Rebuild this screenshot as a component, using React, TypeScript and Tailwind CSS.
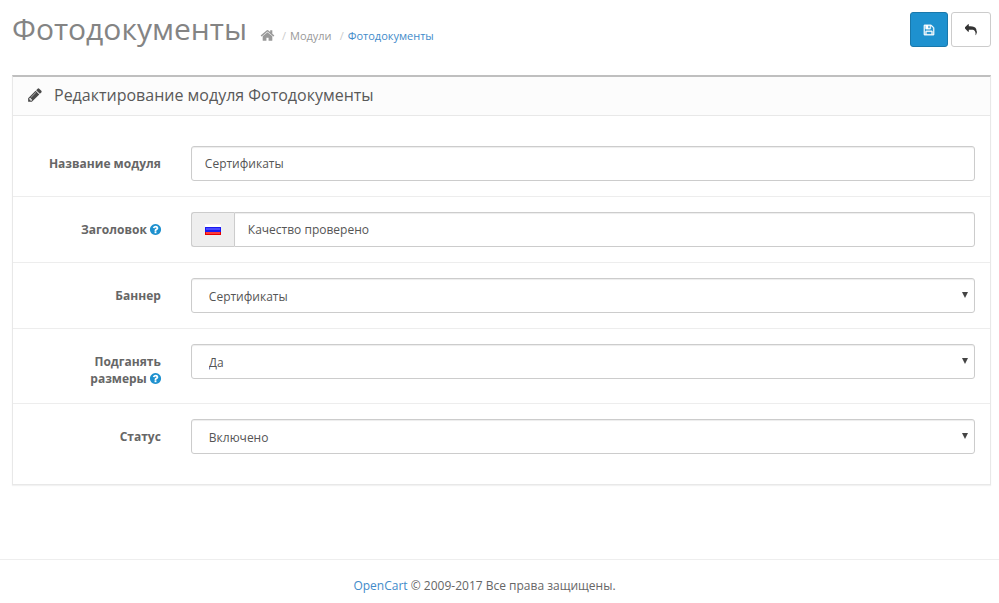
import React, { useState } from "react";

const ICONS = {
  home: "M1472 992v480q0 26-19 45t-45 19h-384v-384h-256v384h-384q-26 0-45-19t-19-45v-480q0-1 .5-3t.5-3l575-474 575 474q1 2 1 6zm223-69l-62 74q-8 9-21 11h-3q-13 0-21-7l-692-577-692 577q-12 8-24 7-13-2-21-11l-62-74q-8-10-7-23.5t11-21.5l719-599q32-26 76-26t76 26l244 204v-195q0-14 9-23t23-9h192q14 0 23 9t9 23v408l219 182q10 8 11 21.5t-7 23.5z",
  pencil:
    "M491 1536l91-91-235-235-91 91v107h128v128h107zm523-928q0-22-22-22-10 0-17 7l-542 542q-7 7-7 17 0 22 22 22 10 0 17-7l542-542q7-7 7-17zm-54-192l416 416-832 832h-416v-416zm683 96q0 53-37 90l-166 166-416-416 166-165q36-38 90-38 53 0 91 38l235 234q37 39 37 91z",
  question:
    "M1024 1376v-192q0-14-9-23t-23-9h-192q-14 0-23 9t-9 23v192q0 14 9 23t23 9h192q14 0 23-9t9-23zm256-672q0-88-55.5-163t-138.5-116-170-41q-243 0-371 213-15 24 8 42l132 100q7 6 19 6 16 0 25-12 53-68 86-92 34-24 86-24 48 0 85.5 26t37.5 59q0 38-20 61t-68 45q-63 28-115.5 86.5t-52.5 125.5v36q0 14 9 23t23 9h192q14 0 23-9t9-23q0-19 21.5-49.5t54.5-49.5q32-18 49-28.5t46-35 44.5-48 28-60.5 12.5-81zm384 192q0 209-103 385.5t-279.5 279.5-385.5 103-385.5-103-279.5-279.5-103-385.5 103-385.5 279.5-279.5 385.5-103 385.5 103 279.5 279.5 103 385.5z",
  reply:
    "M1792 1120q0 166-127 451-3 7-10.5 24t-13.5 30-13 22q-12 17-28 17-15 0-23.5-10t-8.5-25q0-9 2.5-26.5t2.5-23.5q5-68 5-123 0-112-19.5-200.5t-54-153.5-89-112-117.5-78-148-43.5-168.5-17-189.5-4.5h-224v256q0 26-19 45t-45 19-45-19l-512-512q-19-19-19-45t19-45l512-512q19-19 45-19t45 19 19 45v256h224q713 0 875 403 53 134 53 333z",
  save: "M512 1536h768v-384h-768v384zm896 0h128v-896q0-14-10-38.5t-20-34.5l-281-281q-10-10-34-20t-39-10v416q0 40-28 68t-68 28h-576q-40 0-68-28t-28-68v-416h-128v1280h128v-416q0-40 28-68t68-28h832q40 0 68 28t28 68v416zm-384-928v-320q0-13-9.5-22.5t-22.5-9.5h-192q-13 0-22.5 9.5t-9.5 22.5v320q0 13 9.5 22.5t22.5 9.5h192q13 0 22.5-9.5t9.5-22.5zm640 32v928q0 40-28 68t-68 28h-1344q-40 0-68-28t-28-68v-1344q0-40 28-68t68-28h928q40 0 88 20t76 48l280 280q28 28 48 76t20 88z",
};

function Icon({ name, className }: { name: keyof typeof ICONS; className: string }) {
  return (
    <svg viewBox="0 0 1792 1792" fill="currentColor" aria-hidden="true" className={className}>
      <path d={ICONS[name]} />
    </svg>
  );
}

function Flag() {
  return (
    <svg viewBox="0 0 16 11" className="h-[11px] w-4" aria-hidden="true">
      <rect width="16" height="3" fill="#ffffff" />
      <rect y="3" width="16" height="5" fill="#1a1af0" />
      <rect x="1" y="4" width="14" height="2" fill="#4a4aff" />
      <rect y="8" width="16" height="3" fill="#e60000" />
      <rect x="1" y="8" width="14" height="2" fill="#ff3a3a" />
    </svg>
  );
}

const FIELD =
  "h-[35px] w-full min-w-0 border border-[#ccc] bg-white text-xs text-[#555] shadow-[inset_0_1px_1px_rgba(0,0,0,0.075)] outline-none focus:border-[#66afe9]";

function Row({
  id,
  label,
  help,
  children,
}: {
  id: string;
  label: string;
  help?: boolean;
  children: React.ReactNode;
}) {
  const words = label.split(" ");
  const last = words.pop();
  const lead = words.length > 0 ? words.join(" ") + " " : "";
  return (
    <div className="flex items-start border-t border-[#ededed] py-[15px] first:border-t-0">
      <label htmlFor={id} className="w-1/6 px-[15px] pt-[9px] pb-px text-right font-bold">
        {lead}
        <span className="whitespace-nowrap">
          {last}
          {help && (
            <Icon
              name="question"
              className="-mr-px ml-0.5 inline-block size-[13px] align-[-2px] text-[#1e91cf]"
            />
          )}
        </span>
      </label>
      <div className="w-5/6 px-[15px]">{children}</div>
    </div>
  );
}

function Select({ id, options }: { id: string; options: string[] }) {
  return (
    <div className="relative">
      <select id={id} className={`${FIELD} appearance-none rounded-[3px] pt-0.5 pr-8 pl-[17px]`}>
        {options.map((o) => (
          <option key={o}>{o}</option>
        ))}
      </select>
      <svg
        viewBox="0 0 6 6"
        className="pointer-events-none absolute top-[14px] right-[7px] size-1.5 text-[#444]"
        fill="currentColor"
        aria-hidden="true"
      >
        <path d="M0 0h6L3 6z" />
      </svg>
    </div>
  );
}

export default function App() {
  const [name, setName] = useState("Сертификаты");
  const [title, setTitle] = useState("Качество проверено");

  return (
    <div className="bg-white font-['Open_Sans','Noto_Sans',sans-serif] text-xs leading-[17px] text-[#666]">
      <header className="flex items-start justify-between pt-3 pr-2 pl-3">
        <div className="flex items-baseline">
          <h1 className="text-[30px] leading-[34px] text-[#848484]">Фотодокументы</h1>
          <nav className="ml-[13px]">
            <ul className="flex items-baseline text-[11px] text-[#999]">
              <li>
                <a href="#home" aria-label="Главная">
                  <Icon name="home" className="inline-block size-[15px] align-[-3px]" />
                </a>
              </li>
              <li className="ml-[7px] before:pr-1 before:text-[#ccc] before:content-['/']">
                <a href="#modules">Модули</a>
              </li>
              <li className="ml-2 before:pr-1 before:text-[#ccc] before:content-['/']">
                <a href="#photodocs" className="text-[#428bca]">
                  Фотодокументы
                </a>
              </li>
            </ul>
          </nav>
        </div>
        <div className="flex gap-[3px]">
          <button
            type="submit"
            form="module-form"
            aria-label="Сохранить"
            className="flex h-[35px] items-center rounded-[3px] border border-[#1978ab] bg-[#1e91cf] px-3 text-white"
          >
            <Icon name="save" className="size-3 stroke-current stroke-[60]" />
          </button>
          <a
            href="#back"
            aria-label="Отменить"
            className="flex h-[35px] items-center rounded-[3px] border border-[#ccc] bg-white px-[13px] text-[#333]"
          >
            <Icon name="reply" className="size-3" />
          </a>
        </div>
      </header>

      <main className="pt-7 pr-2 pl-3">
        <section className="border border-t-2 border-[#e8e8e8] border-t-[#bfbfbf] shadow-[0_1px_1px_rgba(0,0,0,0.05)]">
          <div className="flex items-center border-b border-[#e8e8e8] bg-[#fcfcfc] px-[14px] pt-2 pb-[10px]">
            <Icon name="pencil" className="size-4 text-[#4a4a4a]" />
            <h3 className="ml-[11px] text-base leading-5 text-[#595959]">
              Редактирование модуля Фотодокументы
            </h3>
          </div>
          <form id="module-form" className="py-[15px]" onSubmit={(e) => e.preventDefault()}>
            <Row id="name" label="Название модуля">
              <input
                id="name"
                type="text"
                value={name}
                onChange={(e) => setName(e.target.value)}
                className={`${FIELD} rounded-[3px] px-[13px]`}
              />
            </Row>
            <Row id="title" label="Заголовок" help>
              <div className="flex">
                <span className="flex h-[35px] shrink-0 items-center rounded-l-[3px] border border-r-0 border-[#ccc] bg-[#eee] px-[13px]">
                  <Flag />
                </span>
                <input
                  id="title"
                  type="text"
                  value={title}
                  onChange={(e) => setTitle(e.target.value)}
                  className={`${FIELD} rounded-r-[3px] px-[13px]`}
                />
              </div>
            </Row>
            <Row id="banner" label="Баннер">
              <Select id="banner" options={["Сертификаты"]} />
            </Row>
            <Row id="fit" label="Подганять размеры" help>
              <Select id="fit" options={["Да", "Нет"]} />
            </Row>
            <Row id="status" label="Статус">
              <Select id="status" options={["Включено", "Отключено"]} />
            </Row>
          </form>
        </section>
      </main>

      <footer className="mt-[74px] border-t border-[#eee] py-[17px] text-center">
        <p className="pr-[30px]">
          <a href="#opencart" className="text-[#428bca]">
            OpenCart
          </a>{" "}
          © 2009-2017 Все права защищены.
        </p>
      </footer>
    </div>
  );
}
